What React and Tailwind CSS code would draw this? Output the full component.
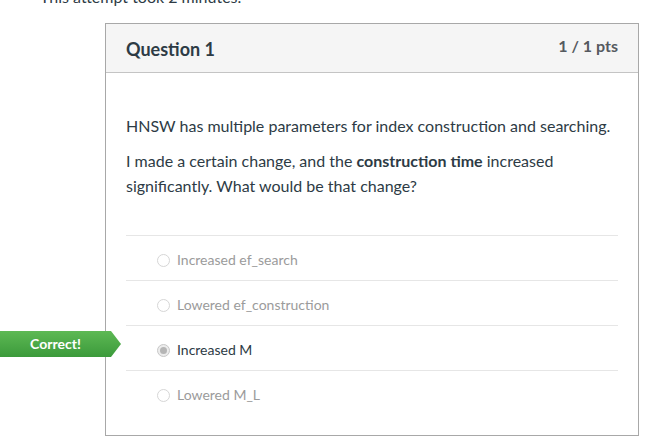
import React from "react";

const answers = [
  { text: "Increased ef_search", selected: false },
  { text: "Lowered ef_construction", selected: false },
  { text: "Increased M", selected: true, correct: true },
  { text: "Lowered M_L", selected: false },
];

function Radio({ selected }) {
  if (selected) {
    return (
      <div className="w-[13px] h-[13px] rounded-full border border-[#c8c8c8] bg-[#ececec] flex items-center justify-center shrink-0">
        <div className="w-[7px] h-[7px] rounded-full bg-[#b5b5b5]" />
      </div>
    );
  }
  return <div className="w-[13px] h-[13px] rounded-full border border-[#d6d6d6] bg-white shrink-0" />;
}

export default function App() {
  return (
    <div
      className="w-[661px] h-[445px] bg-white overflow-hidden text-[#2d3b45]"
      style={{ fontFamily: "Lato, 'Open Sans', sans-serif" }}
    >
      <div className="pl-[40px] mt-[-15px] text-[16px] leading-[24px]">This attempt took 2 minutes.</div>
      <div className="ml-[105px] mt-[14px] w-[534px] border border-[#a8a8a8]">
        <div className="h-[49px] bg-[#f5f5f5] border-b border-[#c4c4c4] flex items-start justify-between px-[20px]">
          <div className="text-[18px] font-bold leading-[24px] mt-[13px] text-[#2d3b45]">Question 1</div>
          <div className="text-[16px] font-bold leading-[22px] mt-[11px] text-[#555a5f]">1 / 1 pts</div>
        </div>
        <div className="px-[20px] pt-[40px] pb-[20px]">
          <div className="text-[16px] leading-[25px]">
            <p>HNSW has multiple parameters for index construction and searching.</p>
            <p className="mt-[10px]">
              I made a certain change, and the <strong className="font-bold">construction time</strong> increased
              significantly. What would be that change?
            </p>
          </div>
          <div className="mt-[37px]">
            {answers.map((a, i) => (
              <div key={i} className="relative h-[45px] border-t border-[#e6e6e6] flex items-center pl-[31px] pt-[4px] gap-[7px]">
                <Radio selected={a.selected} />
                <span
                  className={
                    "text-[14px] leading-[20px] " + (a.selected ? "text-[#2d3b45]" : "text-[#9b9b9b]")
                  }
                >
                  {a.text}
                </span>
                {a.correct && (
                  <div
                    className="absolute left-[-126px] top-[5px] w-[121px] h-[26px] bg-gradient-to-b from-[#5db954] to-[#3b9a3b] flex items-center [clip-path:polygon(0_0,111px_0,121px_50%,111px_100%,0_100%)]"
                  >
                    <span className="w-[111px] text-center text-white font-bold text-[14px] leading-[16px]">Correct!</span>
                  </div>
                )}
              </div>
            ))}
          </div>
        </div>
      </div>
    </div>
  );
}
